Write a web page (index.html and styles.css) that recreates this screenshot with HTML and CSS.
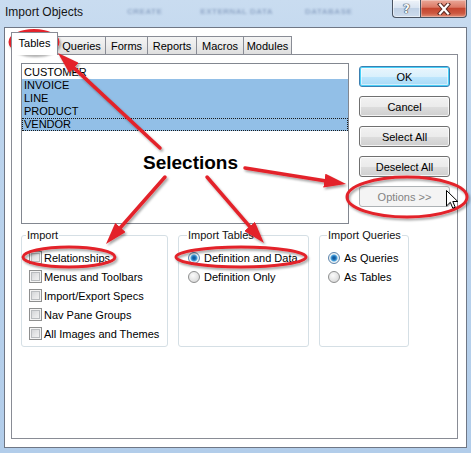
FILE: index.html
```html
<!DOCTYPE html>
<html>
<head>
<meta charset="utf-8">
<title>Import Objects</title>
<link rel="stylesheet" href="styles.css">
</head>
<body>
<div class="window">
  <div class="titlebar">
    <span class="title">Import Objects</span>
    <span class="ghost ghost-create">CREATE</span>
    <span class="ghost ghost-ext">EXTERNAL DATA</span>
    <span class="ghost ghost-db">DATABASE</span>
    <div class="caption">
      <div class="cap help">?</div>
      <div class="cap close">
        <svg width="16" height="12" viewBox="0 0 16 12"><path class="x-out" d="M4 1.5 L12 10.5 M12 1.5 L4 10.5"/><path class="x-in" d="M4 1.5 L12 10.5 M12 1.5 L4 10.5"/></svg>
      </div>
    </div>
  </div>
  <div class="client">
    <div class="tabs">
      <div class="tab active t-tables">Tables</div>
      <div class="tab t-queries">Queries</div>
      <div class="tab t-forms">Forms</div>
      <div class="tab t-reports">Reports</div>
      <div class="tab t-macros">Macros</div>
      <div class="tab t-modules">Modules</div>
    </div>
    <div class="panel">
      <div class="top">
        <div class="listbox">
          <div class="item">CUSTOMER</div>
          <div class="item sel">INVOICE</div>
          <div class="item sel">LINE</div>
          <div class="item sel">PRODUCT</div>
          <div class="item sel focus">VENDOR</div>
        </div>
        <div class="actions">
          <button class="btn default">OK</button>
          <button class="btn">Cancel</button>
          <button class="btn">Select All</button>
          <button class="btn">Deselect All</button>
          <button class="btn disabled">Options &gt;&gt;</button>
        </div>
      </div>
      <div class="groups">
        <fieldset class="group g-import">
          <legend>Import</legend>
          <div class="opt"><span class="check"></span><span>Relationships</span></div>
          <div class="opt"><span class="check"></span><span>Menus and Toolbars</span></div>
          <div class="opt"><span class="check"></span><span>Import/Export Specs</span></div>
          <div class="opt"><span class="check"></span><span>Nav Pane Groups</span></div>
          <div class="opt"><span class="check"></span><span>All Images and Themes</span></div>
        </fieldset>
        <fieldset class="group g-tables">
          <legend>Import Tables</legend>
          <div class="opt"><span class="radio on"></span><span>Definition and Data</span></div>
          <div class="opt"><span class="radio"></span><span>Definition Only</span></div>
        </fieldset>
        <fieldset class="group g-queries">
          <legend>Import Queries</legend>
          <div class="opt"><span class="radio on"></span><span>As Queries</span></div>
          <div class="opt"><span class="radio"></span><span>As Tables</span></div>
        </fieldset>
      </div>
    </div>
  </div>

  <svg class="annot" width="471" height="453" viewBox="0 0 471 453">
    <defs>
      <filter id="sh" x="-20%" y="-20%" width="140%" height="140%">
        <feDropShadow dx="1.5" dy="2" stdDeviation="1" flood-color="#000" flood-opacity="0.35"/>
      </filter>
      <marker id="ah" markerUnits="userSpaceOnUse" markerWidth="22" markerHeight="14" refX="2" refY="7" orient="auto" viewBox="0 0 22 14">
        <path d="M0 0 L22 7 L0 14 Z" fill="#e3232a"/>
      </marker>
    </defs>
    <g class="marks" filter="url(#sh)">
      <ellipse cx="34" cy="42" rx="24" ry="11.5"/>
      <ellipse cx="69" cy="257" rx="46" ry="10"/>
      <ellipse cx="241" cy="257" rx="65" ry="10"/>
      <ellipse cx="407" cy="197" rx="60" ry="20"/>
      <line x1="160" y1="148" x2="72.6" y2="66.6"/>
      <line x1="165" y1="177" x2="119.2" y2="229"/>
      <line x1="207" y1="177" x2="250.9" y2="227.9"/>
      <line x1="245" y1="168" x2="326.3" y2="180.9"/>
    </g>
    <text class="sel-label" x="143" y="169">Selections</text>
    <path class="cursor" transform="translate(446 190)" d="M0.5 0.5 L0.5 16 L4.3 12.3 L6.8 18.2 L9.2 17.2 L6.8 11.5 L11.8 11.5 Z"/>
  </svg>
</div>
</body>
</html>
```

FILE: styles.css
```css
* { box-sizing: border-box; }
html, body { margin: 0; padding: 0; }
body {
  width: 471px;
  height: 453px;
  overflow: hidden;
  font-family: "Liberation Sans", Arial, sans-serif;
  font-size: 11px;
  color: #000;
}

.window {
  position: relative;
  width: 471px;
  height: 453px;
  padding: 0 4px 5px;
  display: flex;
  flex-direction: column;
  background: linear-gradient(180deg, #c9dcf0 0%, #bcd4ed 25%, #b2cdea 100%);
}

/* title bar */
.titlebar {
  height: 27px;
  flex-shrink: 0;
  display: flex;
  align-items: flex-start;
}
.title {
  margin: 5px 0 0 1px;
  font-size: 12px;
  line-height: 14px;
  color: #151515;
  white-space: nowrap;
}
.ghost {
  margin-top: 7px;
  font-size: 8px;
  font-weight: bold;
  letter-spacing: 0.5px;
  color: rgba(45, 75, 125, 0.35);
  filter: blur(1.3px);
  white-space: nowrap;
}
.ghost-create { margin-left: 44px; }
.ghost-ext { margin-left: 38px; }
.ghost-db { margin-left: 32px; }

.caption {
  margin-left: auto;
  display: flex;
}
.cap {
  height: 18px;
  border: 1px solid #4a5462;
  border-top: none;
  display: flex;
  align-items: center;
  justify-content: center;
}
.help {
  width: 28px;
  border-right: none;
  border-radius: 0 0 0 4px;
  background: linear-gradient(180deg, #eef3f9 0%, #d9e4f1 45%, #c0d1e5 50%, #cddced 100%);
  box-shadow: inset 0 0 0 1px rgba(255,255,255,0.5);
  font-family: "DejaVu Sans", sans-serif;
  font-weight: bold;
  font-size: 12px;
  color: #f7f9fb;
  text-shadow: 0 0 1px #2f3a48, 0 0 1px #2f3a48, 0 0 1px #2f3a48;
}
.close {
  width: 47px;
  border-radius: 0 0 4px 0;
  background: linear-gradient(180deg, #eaa898 0%, #dc7a66 42%, #c5462f 50%, #cc5840 78%, #e18f78 100%);
  box-shadow: inset 0 0 0 1px rgba(255,255,255,0.3);
}
.x-out { stroke: #5a2a22; stroke-width: 4.2; fill: none; stroke-linecap: square; }
.x-in { stroke: #fff; stroke-width: 2.2; fill: none; stroke-linecap: square; }

/* client */
.client {
  flex: 1;
  border: 1px solid #6f7785;
  background: #fff;
  padding: 4px 8px 8px 6px;
  display: flex;
  flex-direction: column;
}

.tabs {
  height: 22px;
  flex-shrink: 0;
  display: flex;
  align-items: flex-end;
}
.tab {
  height: 18px;
  padding-top: 1px;
  border: 1px solid #898c95;
  border-bottom: none;
  border-left: none;
  background: linear-gradient(180deg, #f4f4f4 0%, #ebebeb 50%, #dedede 100%);
  display: flex;
  align-items: center;
  justify-content: center;
  line-height: 13px;
  white-space: nowrap;
}
.tab.active {
  height: 23px;
  margin-bottom: -1px;
  padding-top: 0;
  padding-bottom: 1px;
  border-left: 1px solid #898c95;
  background: #fff;
  position: relative;
  z-index: 1;
}
.t-tables { width: 47px; }
.t-queries { width: 48px; }
.t-forms { width: 42px; }
.t-reports { width: 49px; }
.t-macros { width: 47px; }
.t-modules { width: 48px; }

.panel {
  flex: 1;
  border: 1px solid #898c95;
  padding: 8px 0 0 9px;
}

.top {
  display: flex;
  align-items: flex-start;
}
.listbox {
  width: 328px;
  height: 161px;
  border: 1px solid #828790;
  padding-top: 2px;
}
.item {
  height: 13px;
  line-height: 13px;
  padding-left: 2px;
  white-space: nowrap;
}
.item.sel { background: #92bfe7; }
.item.focus {
  outline: 1px dotted #1a1a1a;
  outline-offset: -1px;
}

.actions {
  margin-left: 10px;
  width: 91px;
  padding-top: 3px;
  display: flex;
  flex-direction: column;
  gap: 9px;
}
.btn {
  height: 21px;
  width: 91px;
  margin: 0;
  padding: 0;
  font-family: "Liberation Sans", Arial, sans-serif;
  font-size: 11px;
  color: #000;
  border: 1px solid #707070;
  border-radius: 3px;
  background: linear-gradient(180deg, #f2f2f2 0%, #ebebeb 50%, #dddddd 51%, #cfcfcf 100%);
  box-shadow: inset 0 0 0 1px rgba(255,255,255,0.75);
}
.btn.default {
  border-color: #3c7fb1;
  background: linear-gradient(180deg, #eaf6fd 0%, #d9f0fc 50%, #bee6fd 51%, #a7d9f5 100%);
  box-shadow: inset 0 0 0 1px #48d0f8, inset 0 0 0 2px rgba(255,255,255,0.5);
}
.btn.disabled {
  border-color: #adb2b5;
  background: #f4f4f4;
  color: #838383;
  box-shadow: none;
}

.groups {
  display: flex;
  gap: 10px;
  margin-top: 5px;
}
.group {
  margin: 0;
  min-width: 0;
  height: 118px;
  border: 1px solid #d5dfe5;
  border-radius: 3px;
  padding: 6px 0 0 8px;
}
.group legend {
  padding: 0 1px;
  margin-left: -1px;
  line-height: 13px;
  color: #111;
}
.g-import { width: 147px; padding-left: 7px; }
.g-import legend { margin-left: -3px; }
.g-tables { width: 131px; padding-left: 9px; }
.g-queries { width: 90px; padding-left: 8px; }

.opt {
  height: 19px;
  display: flex;
  align-items: center;
  gap: 2px;
  white-space: nowrap;
}
.check {
  width: 13px;
  height: 13px;
  flex-shrink: 0;
  border: 1px solid #8e8f8f;
  background: linear-gradient(135deg, #cbcdd0 0%, #e6e7e8 55%, #f7f7f7 100%);
  box-shadow: inset 0 0 0 1px #f4f4f4, inset 0 0 0 2px #b9bcbf;
}
.radio {
  width: 12px;
  height: 12px;
  flex-shrink: 0;
  margin-right: 2px;
  border-radius: 50%;
  border: 1px solid #8e8f8f;
  background: radial-gradient(circle at 40% 35%, #fbfbfb 0%, #e4e4e4 55%, #cfcfcf 100%);
}
.radio.on {
  border-color: #5c86ae;
  background: radial-gradient(circle at 50% 50%, #0b4e8e 0, #1b6fb6 1.8px, #55a6dc 3px, #c6e6f8 3.8px, #f2f2f2 4.3px, #d8d8d8 6px);
}

/* annotation overlay */
.annot {
  position: absolute;
  left: 0;
  top: 0;
  pointer-events: none;
}
.marks ellipse {
  fill: none;
  stroke: #e3232a;
  stroke-width: 3;
}
.marks line {
  stroke: #e3232a;
  stroke-width: 3.5;
  stroke-linecap: round;
  marker-end: url(#ah);
}
.sel-label {
  font-family: "Liberation Sans", Arial, sans-serif;
  font-weight: bold;
  font-size: 19px;
  fill: #000;
}
.cursor {
  fill: #fff;
  stroke: #000;
  stroke-width: 1;
  stroke-linejoin: miter;
}
```
